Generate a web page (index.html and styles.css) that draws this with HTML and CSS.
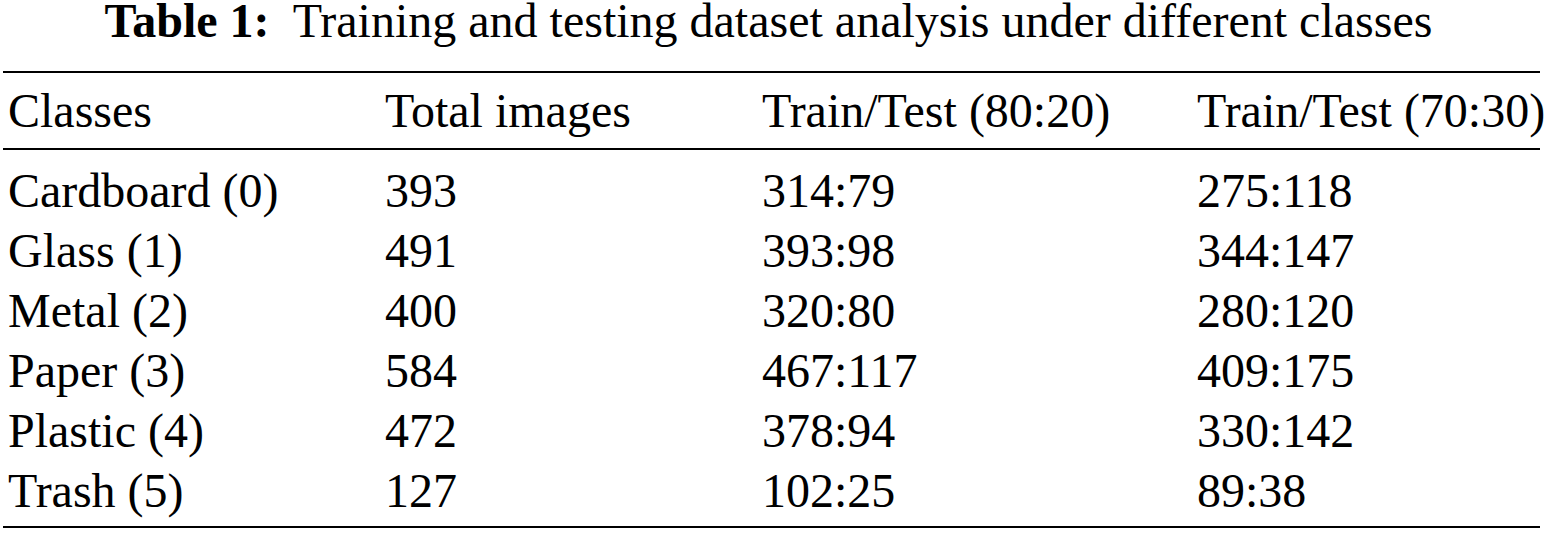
FILE: index.html
```html
<!DOCTYPE html>
<html>
<head>
<meta charset="utf-8">
<link rel="stylesheet" href="styles.css">
</head>
<body>
<div class="wrap">
  <div class="caption"><b>Table 1:</b>&nbsp; Training and testing dataset analysis under different classes</div>
  <table class="data">
    <colgroup>
      <col class="c1"><col class="c2"><col class="c3"><col class="c4">
    </colgroup>
    <thead>
      <tr><th>Classes</th><th>Total images</th><th>Train/Test (80:20)</th><th>Train/Test (70:30)</th></tr>
    </thead>
    <tbody>
      <tr><td>Cardboard (0)</td><td>393</td><td>314:79</td><td>275:118</td></tr>
      <tr><td>Glass (1)</td><td>491</td><td>393:98</td><td>344:147</td></tr>
      <tr><td>Metal (2)</td><td>400</td><td>320:80</td><td>280:120</td></tr>
      <tr><td>Paper (3)</td><td>584</td><td>467:117</td><td>409:175</td></tr>
      <tr><td>Plastic (4)</td><td>472</td><td>378:94</td><td>330:142</td></tr>
      <tr><td>Trash (5)</td><td>127</td><td>102:25</td><td>89:38</td></tr>
    </tbody>
  </table>
</div>
</body>
</html>
```
FILE: styles.css
```css
html, body {
  margin: 0;
  padding: 0;
  background: #fff;
}
body {
  font-family: "Liberation Serif", "Times New Roman", serif;
  font-size: 48px;
  color: #000;
}
.wrap {
  width: 1537px;
  margin-left: 3px;
}
.caption {
  line-height: 42px;
  text-align: center;
  white-space: nowrap;
  margin-bottom: 29px;
  padding-right: 6px;
}
.caption b {
  font-weight: bold;
}
.data {
  width: 1537px;
  border-collapse: collapse;
  table-layout: fixed;
  border-top: 2px solid #000;
  border-bottom: 2px solid #000;
}
.c1 { width: 382px; }
.c2 { width: 377px; }
.c3 { width: 435px; }
.c4 { width: auto; }
.data th, .data td {
  font-weight: normal;
  text-align: left;
  line-height: 60px;
  padding: 0;
  white-space: nowrap;
  vertical-align: top;
}
.data th:first-child, .data td:first-child {
  padding-left: 5px;
}
.data thead th {
  padding-top: 8px;
  padding-bottom: 7px;
  border-bottom: 2px solid #000;
}
.data tbody tr:first-child td {
  padding-top: 11px;
}
.data tbody tr:last-child td {
  padding-bottom: 5px;
}
```
